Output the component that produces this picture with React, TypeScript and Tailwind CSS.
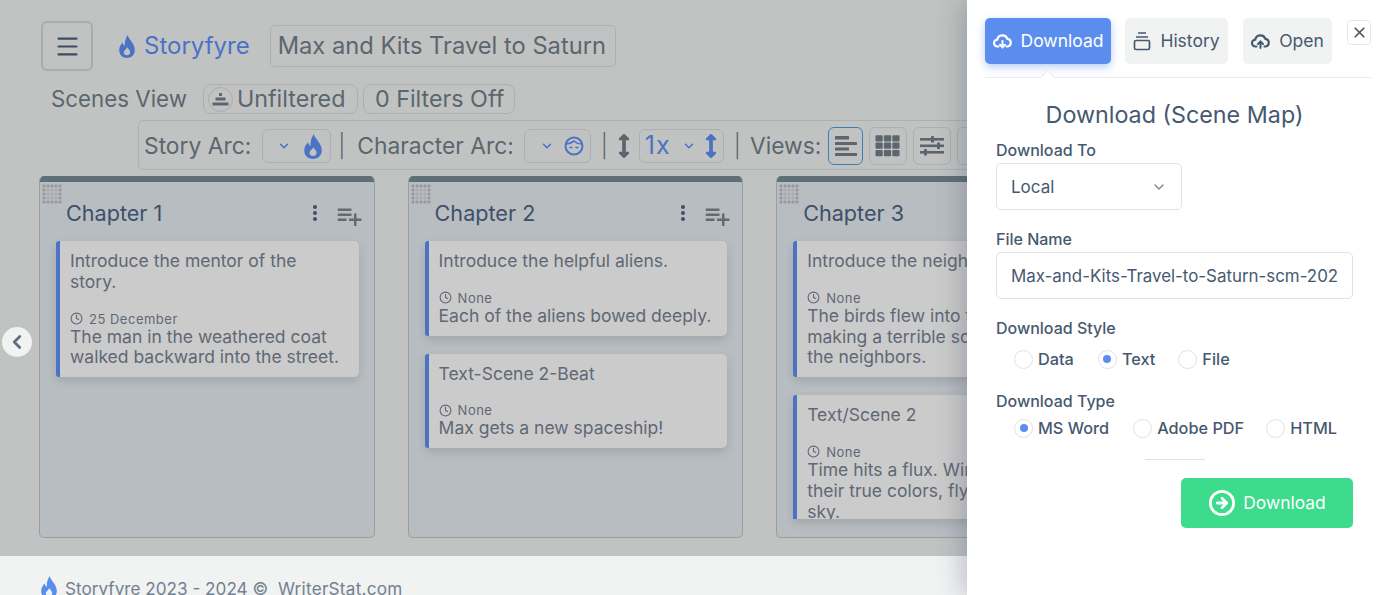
import { ChevronDown, ChevronLeft, Clock, Menu, X } from "lucide-react";
import { FaArrowsAltV } from "react-icons/fa";
import { FiArrowRightCircle } from "react-icons/fi";
import { MdMoreVert, MdPlaylistAdd } from "react-icons/md";

const font = "font-['Inter','Noto_Sans',sans-serif]";

type Card = { title: string; date: string; body: string; clip?: boolean };

const columns: { name: string; cards: Card[] }[] = [
  {
    name: "Chapter 1",
    cards: [
      {
        title: "Introduce the mentor of the story.",
        date: "25 December",
        body: "The man in the weathered coat walked backward into the street.",
      },
    ],
  },
  {
    name: "Chapter 2",
    cards: [
      { title: "Introduce the helpful aliens.", date: "None", body: "Each of the aliens bowed deeply." },
      { title: "Text-Scene 2-Beat", date: "None", body: "Max gets a new spaceship!" },
    ],
  },
  {
    name: "Chapter 3",
    cards: [
      {
        title: "Introduce the neighbors.",
        date: "None",
        body: "The birds flew into the window,\nmaking a terrible sound for\nthe neighbors.",
      },
      {
        title: "Text/Scene 2",
        date: "None",
        body: "Time hits a flux. Winners show\ntheir true colors, flying into the\nsky.",
        clip: true,
      },
    ],
  },
];

function Flame({ className }: { className: string }) {
  return (
    <svg viewBox="0 0 16 23" preserveAspectRatio="none" fill="currentColor" fillRule="evenodd" className={`shrink-0 ${className}`}>
      <path d="M8.7 0C9.2 4 15.8 8 15.8 15C15.8 20 12.2 23 8 23C3.8 23 0.2 20 0.2 15C0.2 11.5 2.4 9 3.5 7.5C4 9 4.6 10.3 5.8 11C5.5 7 6.6 3 8.7 0ZM8 20.2C9.9 20.2 11.2 18.9 11.2 17.2C11.2 15.4 9.4 14 8.3 12.2C7.5 14 4.8 15.4 4.8 17.2C4.8 18.9 6.1 20.2 8 20.2Z" />
    </svg>
  );
}

function KidFace() {
  return (
    <svg width="20" height="20" viewBox="0 0 20 20" fill="none" stroke="currentColor" strokeWidth="2" strokeLinecap="round">
      <circle cx="10" cy="10" r="8.5" />
      <path d="M2.5 8C6 8 8 6.5 10 5C12 6.8 15 8 17.5 8" strokeWidth="1.6" />
      <path d="M6 11.5h2M12 11.5h2" strokeWidth="1.6" />
    </svg>
  );
}

function CloudIcon({ up }: { up?: boolean }) {
  return (
    <svg width="19" height="16" viewBox="0 0 19 16" fill="none" stroke="currentColor" strokeWidth="2.2" strokeLinecap="round">
      <path d="M5.5 13.5H4.6A3.4 3.4 0 0 1 4.2 6.7A5.3 5.3 0 0 1 14.4 5.8A3.9 3.9 0 0 1 14.6 13.5H13.5" />
      {up ? <path d="M9.5 15V9M7 11l2.5-2.5L12 11" strokeWidth="2" /> : <path d="M9.5 8v6M7 11.8l2.5 2.5 2.5-2.5" strokeWidth="2" />}
    </svg>
  );
}

function DragDots() {
  const dots = [0, 1, 2, 3, 4];
  return (
    <svg width="20" height="20" viewBox="0 0 20 20" className="absolute left-[2px] top-[8px]">
      {dots.map((y) =>
        dots.map((x) => (
          <rect
            key={`${x}-${y}`}
            x={x * 4 + 0.5}
            y={y * 4 + 0.5}
            width="3"
            height="3"
            rx="1"
            fill={x === 0 || x === 4 || y === 0 || y === 4 ? "#979a9c" : "#a9acaf"}
          />
        )),
      )}
    </svg>
  );
}

function SceneCard({ card }: { card: Card }) {
  return (
    <div
      className={`rounded-r-[5px] rounded-l-[3px] border-l-4 border-[#4a73c4] bg-[#cbcbcb] pl-[10px] pr-[14px] pt-[10px] text-[17.5px] leading-[20.8px] text-[#5f6874] shadow-[0_4px_10px_rgba(0,0,0,0.12)] ${
        card.clip ? "h-[124px] overflow-hidden rounded-b-none" : "pb-[9px]"
      }`}
    >
      <p>{card.title}</p>
      <div className="mt-[18px] flex h-[16px] items-center gap-[6px] text-[13px] leading-[16px] tracking-[0.5px]">
        <Clock size={13} strokeWidth={2} />
        {card.date}
      </div>
      <p className="whitespace-pre-line">{card.body}</p>
    </div>
  );
}

function Column({ name, cards }: { name: string; cards: Card[] }) {
  return (
    <section className="relative h-[362px] w-[335.6px] shrink-0 overflow-hidden rounded-[5px] border border-t-0 border-[#9b9e9f] bg-[#b8bdc1]">
      <div className="h-[6px] bg-[#5e6f79]" />
      <DragDots />
      <div className="flex h-[59px] items-center justify-between pl-[26px] pr-[10px] pt-[3px]">
        <h2 className="text-[21.6px] font-normal text-[#3d5068]">{name}</h2>
        <div className="flex items-center gap-[7px]">
          <MdMoreVert size={24} className="text-[#3d5068]" />
          <MdPlaylistAdd size={30} className="mt-[5px] text-[#666a6e]" />
        </div>
      </div>
      <div className="flex flex-col gap-[18px] pl-[16px] pr-[15px]">
        {cards.map((card) => (
          <SceneCard key={card.title} card={card} />
        ))}
      </div>
    </section>
  );
}

function BarsIcon() {
  return (
    <svg width="24" height="24" viewBox="0 0 24 24" fill="#5d656e">
      <rect x="1" y="2" width="14" height="3.5" rx="0.5" />
      <rect x="1" y="8" width="22" height="3" rx="0.5" />
      <rect x="1" y="13.5" width="14" height="3" rx="0.5" />
      <rect x="1" y="19" width="22" height="3" rx="0.5" />
    </svg>
  );
}

function GridIcon() {
  return (
    <svg width="26" height="22" viewBox="0 0 26 22" fill="#5d656e">
      {[0, 1, 2].map((y) =>
        [0, 1, 2].map((x) => (
          <rect key={`${x}${y}`} x={x * 8.4 + 0.5} y={y * 7.4 + 0.2} width="7.2" height="6.2" rx="1" />
        )),
      )}
    </svg>
  );
}

function SlidersIcon() {
  return (
    <svg width="26" height="22" viewBox="0 0 26 22" fill="#5d656e">
      <rect x="1" y="3" width="24" height="2.6" />
      <rect x="1" y="9.5" width="24" height="2.6" />
      <rect x="1" y="16" width="24" height="2.6" />
      <rect x="12" y="1" width="3" height="6.5" rx="0.5" />
      <rect x="18" y="7.5" width="3" height="6.5" rx="0.5" />
      <rect x="5" y="14" width="3" height="6.5" rx="0.5" />
    </svg>
  );
}

function PyramidIcon() {
  return (
    <span className="flex h-[25px] w-[25px] shrink-0 items-center justify-center rounded-full border border-[#a9acab]">
      <svg width="17" height="13" viewBox="0 0 17 13" fill="#5d656e">
        <rect x="7" y="0" width="3" height="3" rx="0.5" />
        <rect x="3.5" y="4.5" width="10" height="3" rx="0.5" />
        <rect x="0.5" y="9.5" width="16" height="3" rx="0.5" />
      </svg>
    </span>
  );
}

function StackIcon() {
  return (
    <svg width="18" height="20" viewBox="0 0 18 20" fill="none" stroke="#46596f" strokeWidth="1.7">
      <path d="M5 2h8M3 6h12" />
      <rect x="1.5" y="9.5" width="15" height="9" rx="1.5" />
    </svg>
  );
}

function Radio({ label, checked, gap }: { label: string; checked?: boolean; gap: string }) {
  return (
    <label className={`flex items-center gap-[5px] ${gap}`}>
      <span className="flex h-[19px] w-[19px] items-center justify-center rounded-full border border-[#dfe3e6] bg-white">
        {checked && <span className="h-[8px] w-[8px] rounded-full bg-[#5b8def]" />}
      </span>
      <span className="text-[16.3px] font-medium text-[#46596f]">{label}</span>
    </label>
  );
}

function TabButton({ children, active, width }: { children: React.ReactNode; active?: boolean; width: string }) {
  return (
    <button
      type="button"
      className={`flex h-[46px] items-center justify-center gap-[9px] rounded-[5px] text-[17.5px] ${width} ${
        active
          ? "bg-[#5b8def] text-white shadow-[0_3px_8px_rgba(91,141,239,0.45)]"
          : "bg-[#f1f3f3] text-[#46596f]"
      }`}
    >
      {children}
    </button>
  );
}

function Drawer() {
  return (
    <aside className="absolute inset-y-0 right-0 w-[425px] bg-white pl-[18px] pr-[21px] pt-[18px] text-[#46596f] shadow-[-6px_0_24px_rgba(60,70,90,0.28)]">
      <div className="relative flex border-b border-[#e9ecee] pb-[13px]">
        <TabButton active width="w-[126px]">
          <CloudIcon />
          Download
        </TabButton>
        <div className="ml-[14px]">
          <TabButton width="w-[103px]">
            <StackIcon />
            History
          </TabButton>
        </div>
        <div className="ml-[15px]">
          <TabButton width="w-[89px]">
            <CloudIcon up />
            Open
          </TabButton>
        </div>
        <button
          type="button"
          className="ml-[15px] mt-[2px] flex h-[25px] w-[24px] items-center justify-center rounded-[4px] border border-[#e6e9ec]"
        >
          <X size={17} strokeWidth={2.4} />
        </button>
        <span className="absolute bottom-[-1px] left-[57px] h-[11px] w-[11px] translate-y-[5px] rotate-45 border-l border-t border-[#e9ecee] bg-white" />
      </div>
      <h1 className="mt-[22px] pr-[7px] text-center text-[23.3px] font-normal leading-[30px]">Download (Scene Map)</h1>
      <div className="pl-[11px]">
        <p className="mt-[8px] text-[16px] font-medium leading-[24px]">Download To</p>
        <div className="mt-[1px] flex h-[47px] w-[186px] items-center justify-between rounded-[5px] border border-[#dfe3e6] pl-[14px] pr-[14px] text-[17px]">
          <span className="pt-[2px]">Local</span>
          <ChevronDown size={16} strokeWidth={2.2} className="text-[#7c8a99]" />
        </div>
        <p className="mt-[17px] text-[16px] font-medium leading-[24px]">File Name</p>
        <div className="mt-[1px] flex h-[47px] w-[357px] items-center overflow-hidden whitespace-nowrap rounded-[5px] border border-[#dfe3e6] pl-[14px] pt-[2px] text-[16.9px]">
          Max-and-Kits-Travel-to-Saturn-scm-202
        </div>
        <p className="mt-[17px] text-[16px] font-medium leading-[24px]">Download Style</p>
        <div className="mt-[7px] flex h-[24px] items-center pl-[18px]">
          <Radio label="Data" gap="mr-[24px]" />
          <Radio label="Text" checked gap="mr-[23px]" />
          <Radio label="File" gap="" />
        </div>
        <p className="mt-[18px] text-[16px] font-medium leading-[24px]">Download Type</p>
        <div className="mt-[3px] flex h-[24px] items-center pl-[18px]">
          <Radio label="MS Word" checked gap="mr-[24px]" />
          <Radio label="Adobe PDF" gap="mr-[22px]" />
          <Radio label="HTML" gap="" />
        </div>
        <div className="ml-[149px] mt-[19px] h-px w-[60px] bg-[#dfe3e6]" />
        <div className="mt-[18px] flex justify-end">
          <button
            type="button"
            className="mr-[18px] flex h-[50px] w-[172px] items-center justify-center gap-[7px] rounded-[5px] bg-[#3cdc8c] text-[17.4px] text-white"
          >
            <FiArrowRightCircle size={28} strokeWidth={2.4} />
            Download
          </button>
        </div>
      </div>
    </aside>
  );
}

export default function App() {
  return (
    <div className={`relative h-[595px] w-[1392px] overflow-hidden bg-[#f1f3f3] ${font}`}>
      <main className="h-[556px] overflow-hidden bg-[#c1c3c2] pl-[39px] pt-[21px] text-[#5d656e]">
        <div className="flex items-center">
          <button
            type="button"
            className="ml-[2px] flex h-[50px] w-[52px] items-center justify-center rounded-[6px] border-2 border-[#a9acab] text-[#3d4d63]"
          >
            <Menu size={27} strokeWidth={1.8} />
          </button>
          <div className="ml-[26px] flex items-center gap-[9px] text-[24px] text-[#4a73c4]">
            <Flame className="h-[23px] w-[16px]" />
            Storyfyre
          </div>
          <div className="ml-[20px] flex h-[42px] w-[346px] items-center rounded-[5px] border border-[#adb0af] pl-[7px] text-[23.7px]">
            Max and Kits Travel to Saturn
          </div>
        </div>
        <div className="mt-[12px] flex h-[31px] items-center pl-[12px]">
          <span className="text-[22.3px]">Scenes View</span>
          <div className="ml-[16px] flex h-[30px] w-[155px] items-center gap-[4px] rounded-[8px] border border-[#adb0af] pl-[4px] pt-[2px] text-[23.3px]">
            <PyramidIcon />
            Unfiltered
          </div>
          <div className="ml-[5px] flex h-[30px] w-[152px] items-center rounded-[8px] border border-[#adb0af] pl-[11px] pt-[1px] text-[23.3px]">
            0 Filters Off
          </div>
        </div>
        <div className="ml-[99px] mt-[6px] flex h-[50px] w-[900px] items-center rounded-[5px] border border-[#adb0af] pl-[5px] pt-[2px] text-[22.8px]">
          Story Arc:
          <span className="ml-[11px] flex h-[34px] w-[69px] items-center justify-end gap-[13px] rounded-[6px] border border-[#adb0af] pr-[8px] text-[#4a73c4]">
            <ChevronDown size={14} strokeWidth={2.6} />
            <Flame className="h-[25px] w-[18px]" />
          </span>
          <span className="ml-[7px] font-light">|</span>
          <span className="ml-[12px]">Character Arc:</span>
          <span className="ml-[10px] flex h-[34px] w-[67px] items-center justify-end gap-[10px] rounded-[6px] border border-[#adb0af] pr-[6px] text-[#4a73c4]">
            <ChevronDown size={14} strokeWidth={2.6} />
            <KidFace />
          </span>
          <span className="ml-[10px] font-light">|</span>
          <FaArrowsAltV size={24} className="ml-[4px]" />
          <span className="ml-[3px] flex h-[34px] w-[85px] items-center justify-between rounded-[6px] border border-[#adb0af] pl-[5px] text-[25px] text-[#4a73c4]">
            <span className="tracking-[1px]">1x</span>
            <ChevronDown size={14} strokeWidth={2.6} className="ml-[8px]" />
            <FaArrowsAltV size={24} />
          </span>
          <span className="ml-[10px] font-light">|</span>
          <span className="ml-[9px]">Views:</span>
          <span className="ml-[7px] flex h-[38px] w-[35px] items-center justify-center rounded-[6px] border border-[#3b7db5]">
            <BarsIcon />
          </span>
          <span className="ml-[6px] flex h-[38px] w-[38px] items-center justify-center rounded-[6px] border border-[#adb0af]">
            <GridIcon />
          </span>
          <span className="ml-[6px] flex h-[38px] w-[38px] items-center justify-center rounded-[6px] border border-[#adb0af]">
            <SlidersIcon />
          </span>
          <span className="ml-[6px] h-[38px] w-[38px] rounded-[6px] border border-[#adb0af]" />
        </div>
        <div className="mt-[6px] flex gap-[33px]">
          {columns.map((column) => (
            <Column key={column.name} name={column.name} cards={column.cards} />
          ))}
        </div>
      </main>
      <footer className="flex items-start gap-[8px] pl-[41px] pt-[20px] text-[17.15px] leading-[26px] text-[#74808e]">
        <Flame className="h-[23px] w-[16px] text-[#5b8def]" />
        <span className="whitespace-pre">
          Storyfyre 2023 - 2024 © <span className="tracking-[0.25px]"> WriterStat.com</span>
        </span>
      </footer>
      <button
        type="button"
        className="absolute left-[2px] top-[327px] flex h-[30px] w-[30px] items-center justify-center rounded-full bg-[#f1f3f3] text-[#5f6f82]"
      >
        <ChevronLeft size={22} strokeWidth={3} />
      </button>
      <Drawer />
    </div>
  );
}
